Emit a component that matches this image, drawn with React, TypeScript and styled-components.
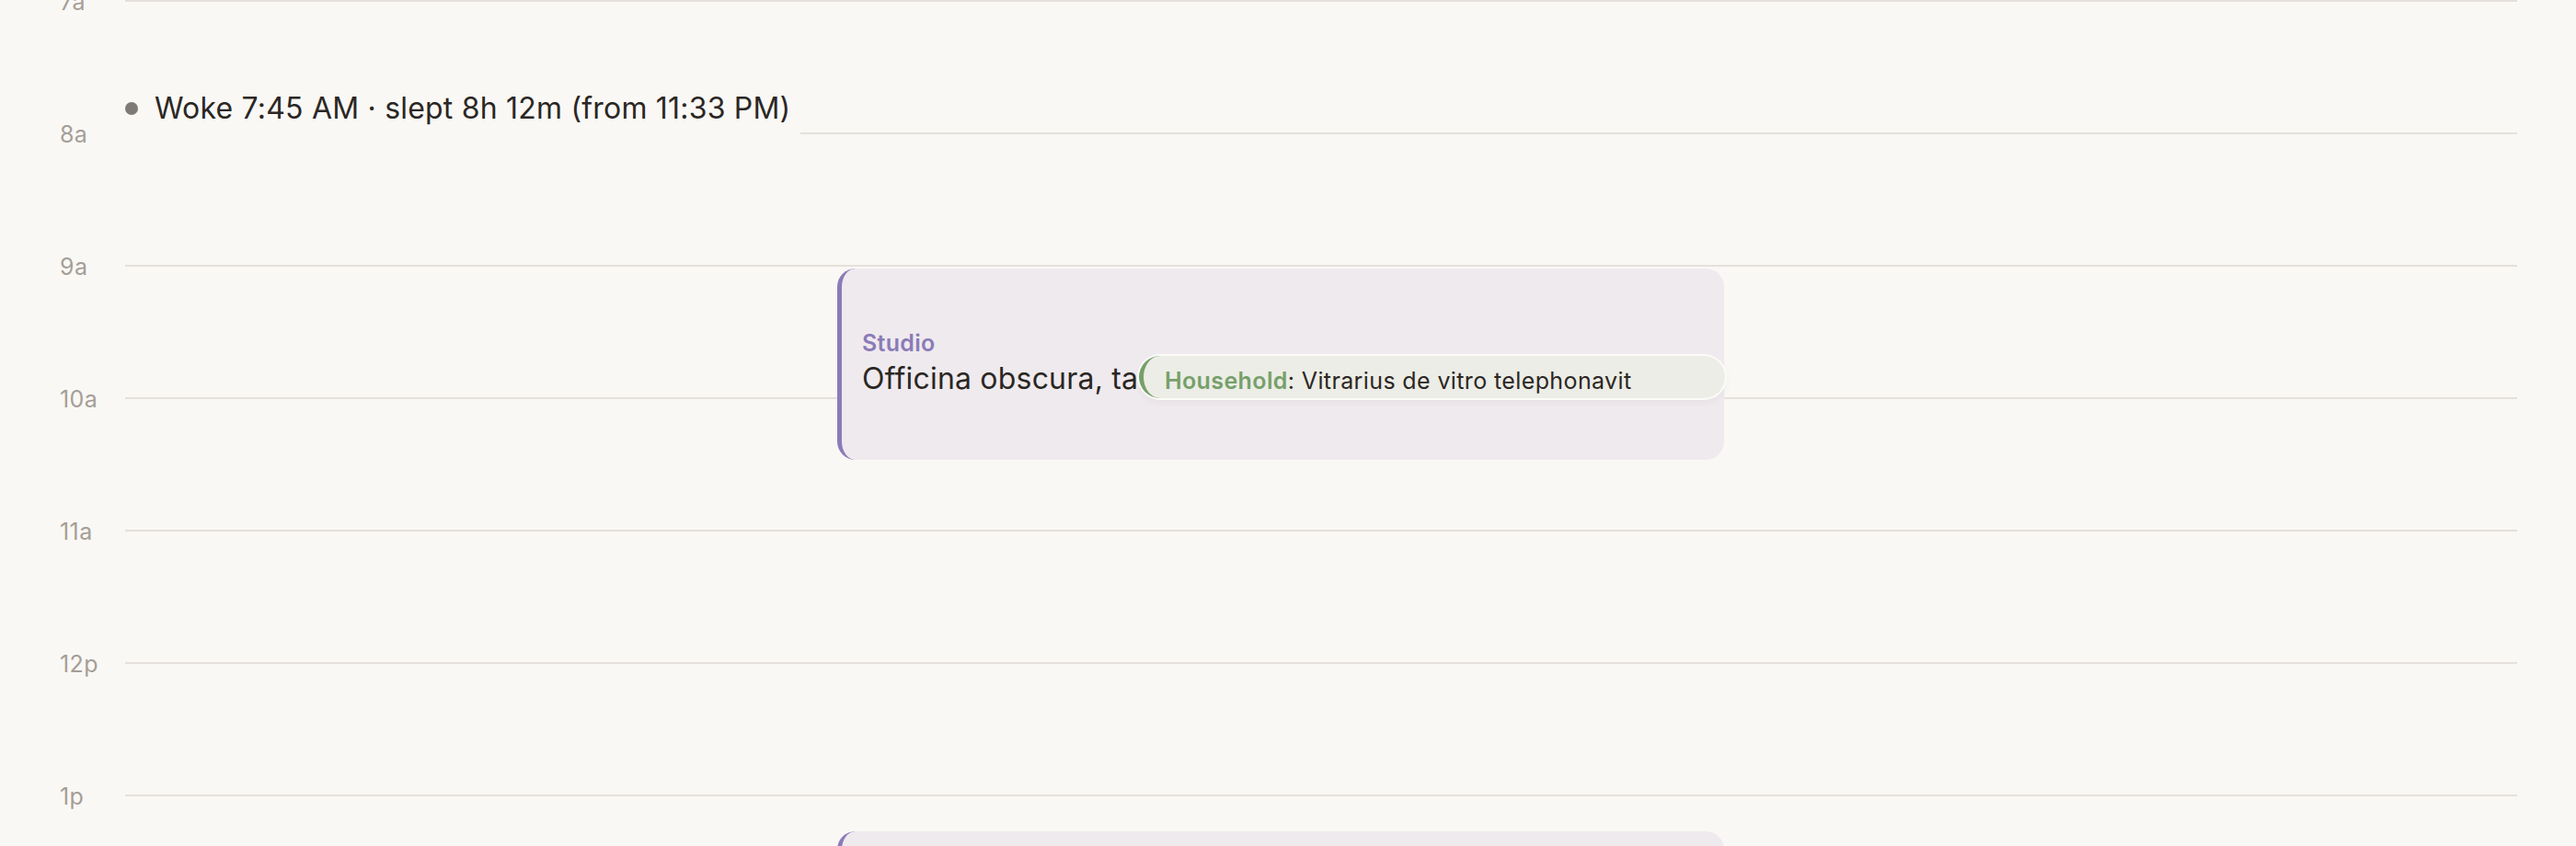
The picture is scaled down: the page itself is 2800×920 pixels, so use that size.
import styled, { createGlobalStyle } from "styled-components";

const HOUR_HEIGHT = 144;
const PX_PER_MIN = HOUR_HEIGHT / 60;
const DAY_START = 7; // first hour on the grid

const GlobalStyle = createGlobalStyle`
  html, body {
    margin: 0;
    padding: 0;
    overflow: hidden;
    background: #f9f8f5;
    font-family: Inter, "Noto Sans", sans-serif;
    color: #2b2724;
  }
`;

const Timeline = styled.div`
  position: relative;
  padding-right: 64px;
`;

const HourRow = styled.div`
  display: grid;
  grid-template-columns: 136px 1fr;
  height: ${HOUR_HEIGHT}px;
`;

const HourLabel = styled.div`
  padding-left: 65px;
  margin-top: -10px;
  font-size: 25px;
  line-height: 25px;
  letter-spacing: 0.4px;
  color: #a59e97;
`;

const HourRule = styled.div`
  border-top: 2px solid #e5e0db;
`;

const EventLayer = styled.div`
  position: absolute;
  top: 0;
  bottom: 0;
  left: 136px;
  right: 64px;
`;

const SleepMarker = styled.div`
  position: absolute;
  left: 0;
  display: flex;
  align-items: center;
  gap: 18px;
  padding: 0 11px 12px 0;
  background: #f9f8f5;
  font-size: 32px;
  line-height: 36px;
  letter-spacing: 0.2px;
`;

const Dot = styled.span`
  width: 14px;
  height: 14px;
  border-radius: 50%;
  background: #807a76;
`;

const EventCard = styled.div<{ $accent: string }>`
  position: absolute;
  left: 774px;
  width: 964px;
  box-sizing: border-box;
  display: flex;
  flex-direction: column;
  justify-content: center;
  padding: 0 24px 0 22px;
  background: #efeaee;
  border-left: 5px solid ${({ $accent }) => $accent};
  border-radius: 20px;
  overflow: hidden;
`;

const Calendar = styled.div<{ $accent: string }>`
  font-size: 25px;
  line-height: 32px;
  font-weight: 600;
  letter-spacing: 0.3px;
  color: ${({ $accent }) => $accent};
`;

const EventTitle = styled.div`
  font-size: 32px;
  line-height: 46px;
  letter-spacing: 0.2px;
  white-space: nowrap;
  overflow: hidden;
  text-overflow: ellipsis;
`;

const Chip = styled.div<{ $accent: string }>`
  position: absolute;
  left: 1102px;
  width: 637px;
  height: 46px;
  box-sizing: border-box;
  display: flex;
  align-items: center;
  padding: 7px 0 0 23px;
  background: #ecede6;
  border-left: 5px solid ${({ $accent }) => $accent};
  border-radius: 999px;
  box-shadow: 0 0 0 2px #fbfbf8, 0 4px 10px rgba(60, 50, 40, 0.06);
  font-size: 25px;
  letter-spacing: 0.38px;
  white-space: nowrap;
`;

const ChipCalendar = styled.span<{ $accent: string }>`
  font-weight: 600;
  color: ${({ $accent }) => $accent};
`;

const hours = ["7a", "8a", "9a", "10a", "11a", "12p", "1p"];

// pixel offset of a time from the top of the grid
const at = (h: number, m = 0) => ((h - DAY_START) * 60 + m) * PX_PER_MIN;

const events = [
  {
    calendar: "Studio",
    title: "Officina obscura, tabulae et colores in pariete",
    start: at(9),
    end: at(10, 30),
  },
  {
    calendar: "Studio",
    title: "Pictura murorum",
    start: at(13, 15),
    end: at(14, 30),
  },
];

const STUDIO = "#8b7bb8";
const HOUSEHOLD = "#76a06a";

export default function App() {
  return (
    <>
      <GlobalStyle />
      <Timeline>
        {hours.map((h) => (
          <HourRow key={h}>
            <HourLabel>{h}</HourLabel>
            <HourRule />
          </HourRow>
        ))}
        <EventLayer>
          <SleepMarker style={{ top: at(7, 45) - 8 }}>
            <Dot />
            Woke 7:45 AM · slept 8h 12m (from 11:33 PM)
          </SleepMarker>
          {events.map((ev) => (
            <EventCard
              key={ev.title}
              $accent={STUDIO}
              style={{ top: ev.start + 4, height: ev.end - ev.start - 8 }}
            >
              <Calendar $accent={STUDIO}>{ev.calendar}</Calendar>
              <EventTitle>{ev.title}</EventTitle>
            </EventCard>
          ))}
          <Chip $accent={HOUSEHOLD} style={{ top: at(9, 40) + 3 }}>
            <ChipCalendar $accent={HOUSEHOLD}>Household</ChipCalendar>
            : Vitrarius de vitro telephonavit
          </Chip>
        </EventLayer>
      </Timeline>
    </>
  );
}
